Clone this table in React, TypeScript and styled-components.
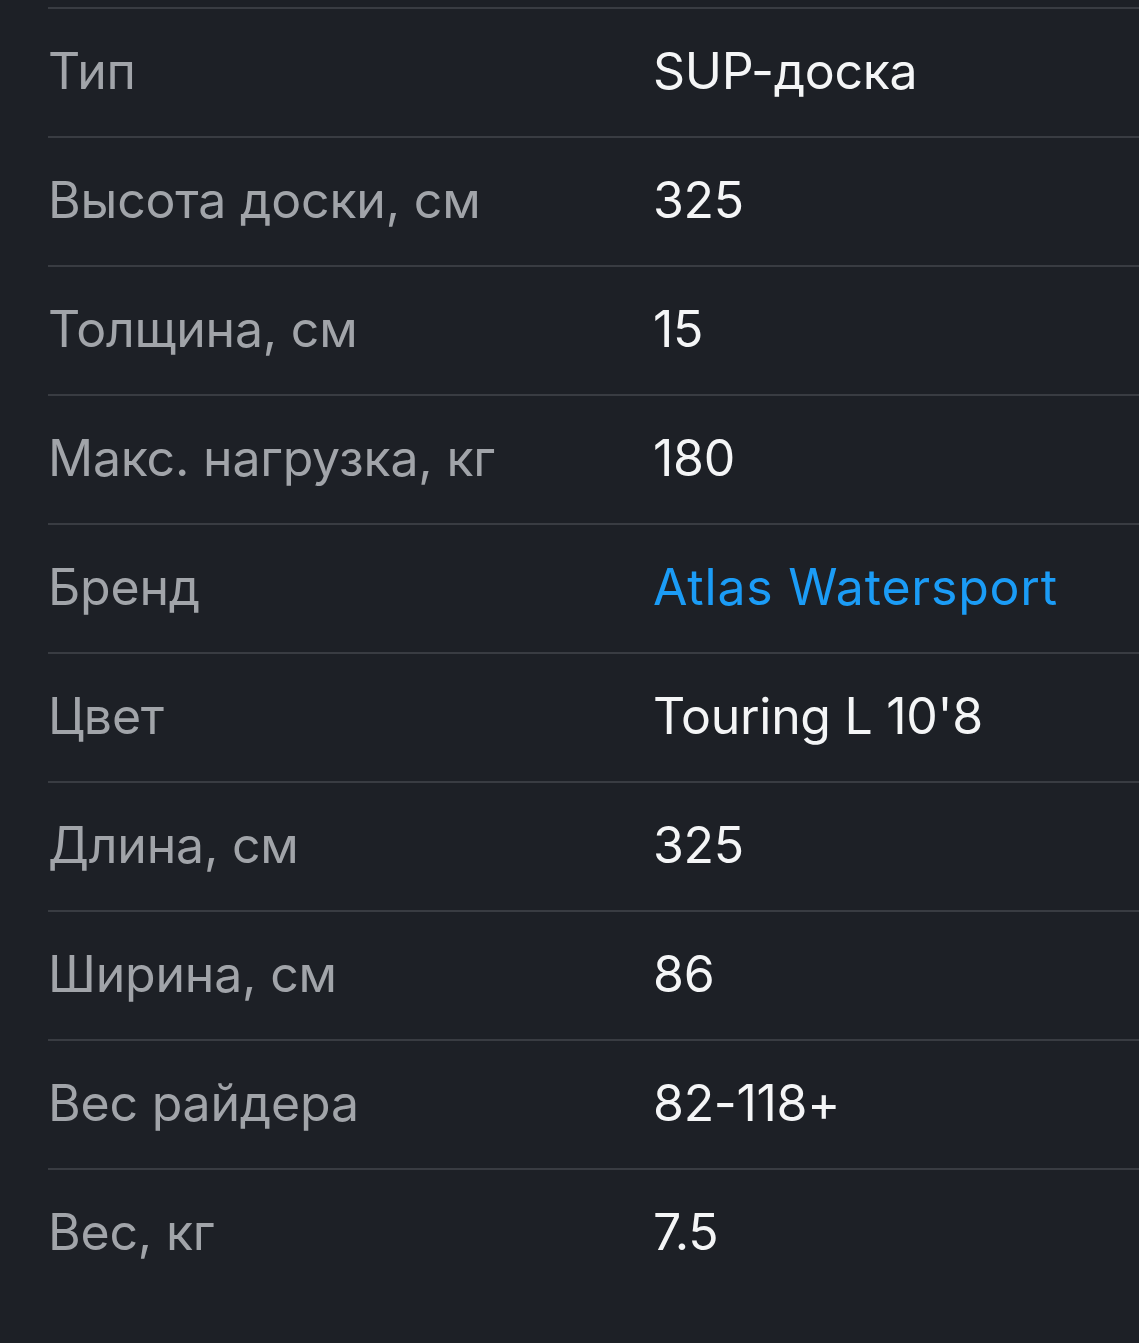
import React from 'react';
import styled, { createGlobalStyle } from 'styled-components';

const GlobalStyle = createGlobalStyle`
  html, body {
    margin: 0;
    padding: 0;
    background: #1d2026;
  }
  body {
    font-family: Inter, "Noto Sans", "DejaVu Sans", sans-serif;
  }
`;

const Page = styled.div`
  min-height: 1343px;
  background: #1d2026;
  padding: 7px 0 0 48px;
  box-sizing: border-box;
`;

const List = styled.dl`
  margin: 0;
`;

const Row = styled.div`
  display: grid;
  grid-template-columns: 605px 1fr;
  align-items: center;
  height: 129px;
  padding-bottom: 4px;
  box-sizing: border-box;
  border-top: 2px solid #393c42;
`;

const Label = styled.dt`
  font-size: 50px;
  line-height: 1.2;
  letter-spacing: -0.2px;
  color: #a1a4a9;
`;

const Value = styled.dd<{ $link?: boolean }>`
  margin: 0;
  font-size: 50px;
  line-height: 1.2;
  letter-spacing: ${p => (p.$link ? '0.8px' : '-0.3px')};
  color: ${p => (p.$link ? '#1b9cf6' : '#f4f5f6')};
`;

const specs: { label: string; value: string; link?: boolean }[] = [
  { label: 'Тип', value: 'SUP-доска' },
  { label: 'Высота доски, см', value: '325' },
  { label: 'Толщина, см', value: '15' },
  { label: 'Макс. нагрузка, кг', value: '180' },
  { label: 'Бренд', value: 'Atlas Watersport', link: true },
  { label: 'Цвет', value: "Touring L 10'8" },
  { label: 'Длина, см', value: '325' },
  { label: 'Ширина, см', value: '86' },
  { label: 'Вес райдера', value: '82-118+' },
  { label: 'Вес, кг', value: '7.5' },
];

export default function App() {
  return (
    <>
      <GlobalStyle />
      <Page>
        <List>
          {specs.map(s => (
            <Row key={s.label}>
              <Label>{s.label}</Label>
              <Value $link={s.link}>{s.value}</Value>
            </Row>
          ))}
        </List>
      </Page>
    </>
  );
}
